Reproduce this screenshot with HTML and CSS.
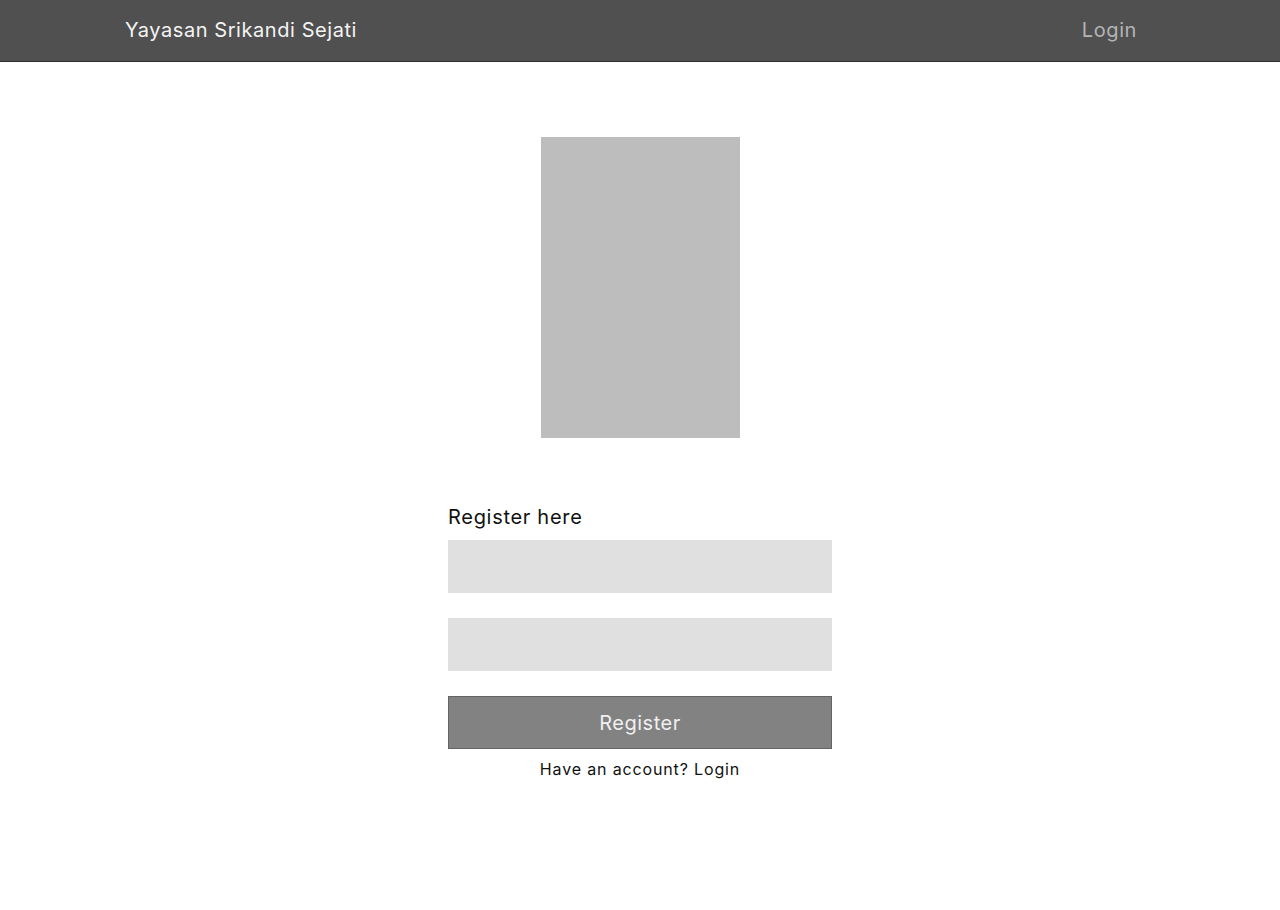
FILE: index.html
```html
<!DOCTYPE html>
<html>
<head>
<meta charset="utf-8">
<link rel="stylesheet" href="styles.css">
</head>
<body>
<nav class="navbar">
  <div class="brand">Yayasan Srikandi Sejati</div>
  <a class="nav-login" href="#">Login</a>
</nav>
<main class="main">
  <div class="picture"></div>
  <form class="form">
    <div class="form-title">Register here</div>
    <div class="input"></div>
    <div class="input"></div>
    <button class="btn" type="button">Register</button>
    <div class="hint">Have an account? Login</div>
  </form>
</main>
</body>
</html>
```
FILE: styles.css
```css
* { box-sizing: border-box; }
body {
  margin: 0;
  font-family: Inter, "Noto Sans", sans-serif;
  background: #fff;
  color: #111;
}
.navbar {
  height: 62px;
  background: #505050;
  border-bottom: 1px solid #2e2e2e;
  display: flex;
  align-items: center;
  justify-content: space-between;
  padding: 0 143px 0 125px;
}
.brand {
  color: #f4f4f4;
  font-size: 20px;
  letter-spacing: 0.57px;
  margin-top: -1px;
}
.nav-login {
  color: #b4b4b4;
  font-size: 20px;
  letter-spacing: 0.6px;
  text-decoration: none;
  margin-top: -1px;
}
.main {
  display: flex;
  flex-direction: column;
  align-items: center;
  padding-top: 75px;
}
.picture {
  width: 199px;
  height: 301px;
  background: #bdbdbd;
}
.form {
  width: 384px;
  margin-top: 63px;
  display: flex;
  flex-direction: column;
}
.form-title {
  font-size: 20px;
  line-height: 32px;
  letter-spacing: 0.7px;
  color: #111;
  margin-bottom: 7px;
}
.input {
  height: 53px;
  background: #e0e0e0;
  margin-bottom: 25px;
}
.btn {
  height: 53px;
  background: #828282;
  border: 1px solid #646464;
  color: #f0f0f0;
  font-family: Inter, "Noto Sans", sans-serif;
  font-size: 20px;
  letter-spacing: 0.5px;
  padding: 0;
  margin: 0;
}
.hint {
  text-align: center;
  font-size: 16px;
  line-height: 20px;
  letter-spacing: 0.85px;
  margin-top: 10px;
  color: #111;
}
```
